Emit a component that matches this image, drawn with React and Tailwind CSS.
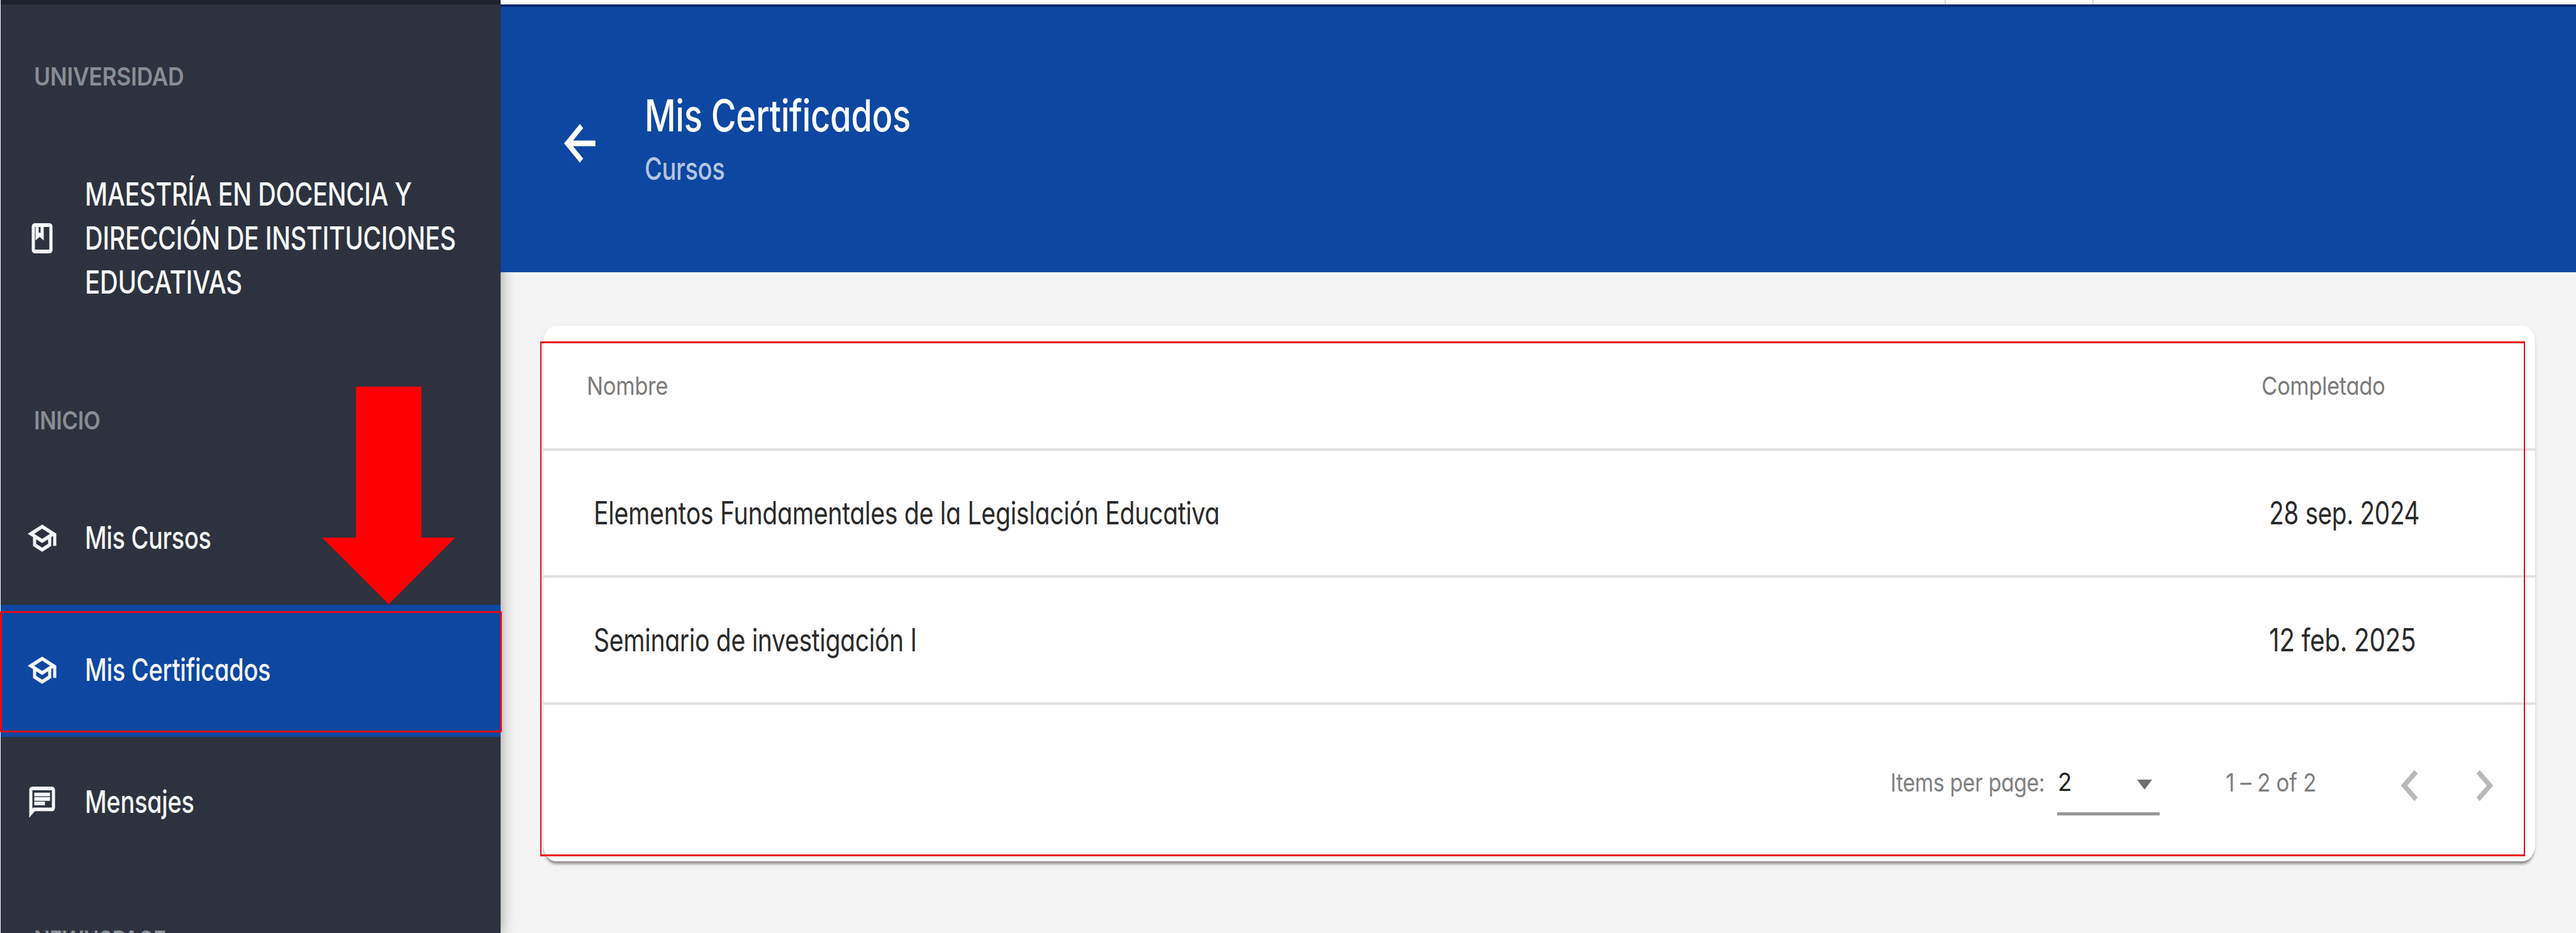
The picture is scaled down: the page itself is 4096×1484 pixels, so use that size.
import { useLayoutEffect, useRef, useState } from "react";
import {
  MdArrowBack,
  MdChevronLeft,
  MdChevronRight,
  MdOutlineChat,
  MdOutlineClass,
  MdOutlineSchool,
} from "react-icons/md";

/* One line of text, condensed horizontally to the width of its box. */
function Line({ className = "", children }) {
  const box = useRef(null);
  const text = useRef(null);
  const [scale, setScale] = useState(1);

  useLayoutEffect(() => {
    setScale(box.current.clientWidth / text.current.offsetWidth);
  }, []);

  return (
    <div ref={box} className={`shrink-0 ${className}`}>
      <span
        ref={text}
        className="block w-max origin-left whitespace-nowrap"
        style={{ transform: `scaleX(${scale})` }}
      >
        {children}
      </span>
    </div>
  );
}

/* Material icon with slightly thickened outlines. */
function BoldIcon({ icon: Icon, className }) {
  return (
    <Icon
      preserveAspectRatio="none"
      className={`shrink-0 stroke-current stroke-[0.5] [&>path[fill=none]]:stroke-none ${className}`}
    />
  );
}

function SectionLabel({ className, width, children }) {
  return (
    <div className={`flex items-center pl-[53px] text-[40px] font-semibold text-[#898c94] ${className}`}>
      <Line className={width}>{children}</Line>
    </div>
  );
}

function NavItem({ icon, iconSize, width, active, children }) {
  return (
    <a
      className={`flex h-[210px] shrink-0 items-center pb-[3px] pl-[42px] text-[50px] font-medium text-[#f6f7f8] ${
        active ? "bg-[#0d47a1]" : ""
      }`}
    >
      <span className="flex w-[92px] shrink-0 items-center">
        <BoldIcon icon={icon} className={iconSize} />
      </span>
      <Line className={width}>{children}</Line>
    </a>
  );
}

function Sidebar() {
  return (
    <aside className="relative flex h-full w-[796px] shrink-0 flex-col border-l border-white bg-[#2d323e] shadow-[0_0_22px_rgba(0,0,0,0.4)]">
      <div className="h-[7px] shrink-0 bg-[#1e222c]" />
      <SectionLabel className="h-[229px] shrink-0" width="w-[238px]">UNIVERSIDAD</SectionLabel>
      <div className="flex h-[286px] shrink-0 items-center pl-[42px] text-[51px] leading-[70px] font-medium text-[#f6f7f8]">
        <span className="flex w-[92px] shrink-0">
          <BoldIcon icon={MdOutlineClass} className="h-[56px] w-[48px]" />
        </span>
        <div>
          <Line className="w-[520px]">MAESTRÍA EN DOCENCIA Y</Line>
          <Line className="w-[590px]">DIRECCIÓN DE INSTITUCIONES</Line>
          <Line className="w-[250px]">EDUCATIVAS</Line>
        </div>
      </div>
      <SectionLabel className="mt-[64px] h-[166px] shrink-0" width="w-[105px]">INICIO</SectionLabel>
      <NavItem icon={MdOutlineSchool} iconSize="h-[56px] w-[48px]" width="w-[201px]">Mis Cursos</NavItem>
      <NavItem icon={MdOutlineSchool} iconSize="h-[56px] w-[48px]" width="w-[295px]" active>
        Mis Certificados
      </NavItem>
      <NavItem icon={MdOutlineChat} iconSize="h-[57px] w-[48px]" width="w-[174px]">Mensajes</NavItem>
      <SectionLabel className="h-[225px] shrink-0" width="w-[210px]">NEWUSPACE</SectionLabel>

      {/* Annotations: arrow and frame round the active entry */}
      <svg viewBox="0 0 212 346" className="absolute top-[615px] left-[511px] h-[346px] w-[212px] fill-[#ff0000]">
        <path d="M54 0H158V240H212L106 346L0 240H54Z" />
      </svg>
      <div className="absolute top-[972px] -left-px h-[193px] w-[798px] rounded-[2px] border-[3px] border-[#e60a17]" />
    </aside>
  );
}

function Header() {
  return (
    <header className="relative z-20 flex h-[426px] shrink-0 items-start border-t-[4px] border-[#042a70] bg-[#0d47a1] pl-[90px]">
      <BoldIcon icon={MdArrowBack} className="mt-[173px] h-[88px] w-[72px] text-white" />
      <div className="mt-[130px] ml-[67px]">
        <Line className="w-[423px] text-[70px] leading-[86px] font-medium text-white">Mis Certificados</Line>
        <Line className="mt-[12px] w-[127px] text-[49px] leading-[60px] font-medium text-[#b4c5e2]">Cursos</Line>
      </div>
    </header>
  );
}

const rows = [
  ["Elementos Fundamentales de la Legislación Educativa", "w-[995px]", "28 sep. 2024", "w-[239px]"],
  ["Seminario de investigación I", "w-[514px]", "12 feb. 2025", "w-[233px]"],
];

function Paginator() {
  return (
    <div className="flex h-[249px] items-center pb-[2px] text-[40px] text-[#808080]">
      <Line className="ml-[2142px] w-[245px]">Items per page:</Line>
      <div className="ml-[20px] flex h-[104px] w-[163px] items-center justify-between border-b-[5px] border-[#989898] pt-[3px] pr-[12px] pl-[1px]">
        <Line className="w-[22px] text-[#222222]">2</Line>
        <svg viewBox="0 0 24 16" className="mt-[8px] h-[16px] w-[24px] fill-[#707070]">
          <path d="M0 0H24L12 16Z" />
        </svg>
      </div>
      <Line className="ml-[105px] w-[144px]">1 – 2 of 2</Line>
      <MdChevronLeft preserveAspectRatio="none" className="mt-[10px] ml-[106px] h-[99px] w-[86px] shrink-0 text-[#b8b8b8]" />
      <MdChevronRight preserveAspectRatio="none" className="mt-[10px] ml-[32px] h-[99px] w-[86px] shrink-0 text-[#b8b8b8]" />
    </div>
  );
}

function CertificatesCard() {
  return (
    <section className="relative mt-[85px] ml-[68px] h-[852px] w-[3167px] shrink-0 rounded-[20px/26px] bg-white shadow-[0_6px_4px_-2px_rgba(0,0,0,0.42),0_2px_8px_rgba(0,0,0,0.07)]">
      <div className="flex h-[199px] border-b-[4px] border-[#e1e1e1] pt-[71px] text-[40px] leading-[50px] text-[#7b7b7b]">
        <Line className="ml-[69px] w-[129px]">Nombre</Line>
        <Line className="ml-[2534px] w-[196px]">Completado</Line>
      </div>
      {rows.map(([name, nameWidth, date, dateWidth]) => (
        <div
          key={name}
          className="flex h-[202px] items-center border-b-[4px] border-[#e1e1e1] pl-[80px] text-[50px] text-[#2b2b2b]"
        >
          <div className="w-[2664px]">
            <Line className={nameWidth}>{name}</Line>
          </div>
          <Line className={dateWidth}>{date}</Line>
        </div>
      ))}
      <Paginator />

      {/* Annotation frame */}
      <div className="absolute top-[25px] -left-[5px] h-[819px] w-[3156px] border-x-[2px] border-y-[3px] border-[#e60a12]" />
    </section>
  );
}

export default function App() {
  return (
    <div className="flex h-[1484px] w-[4096px] overflow-hidden bg-[#f4f4f4] font-['Inter','Lato',sans-serif] tracking-tight [font-feature-settings:'cv11']">
      <div className="relative z-10 h-full shrink-0">
        <Sidebar />
      </div>
      <main className="flex h-full grow flex-col">
        <div className="relative z-20 flex h-[7px] shrink-0 bg-[#fbfafb] pl-[2296px]">
          <div className="h-full w-[237px] border-x-[2px] border-[#d3d3d6]" />
        </div>
        <Header />
        <CertificatesCard />
      </main>
    </div>
  );
}
